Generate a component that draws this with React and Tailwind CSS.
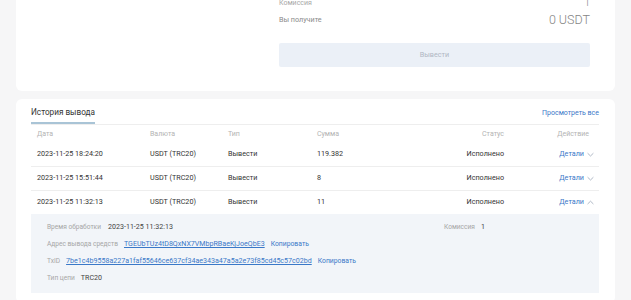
import React from "react";

const rows = [
  { date: "2023-11-25 18:24:20", amount: "119.382", open: false },
  { date: "2023-11-25 15:51:44", amount: "8", open: false },
  { date: "2023-11-25 11:32:13", amount: "11", open: true },
];

function Chevron({ up }) {
  return (
    <svg width="7" height="5" viewBox="0 0 7 5" className="ml-[3px]">
      <path
        d={up ? "M0.6 4 L3.5 1.2 L6.4 4" : "M0.6 1.2 L3.5 4 L6.4 1.2"}
        fill="none"
        stroke="#9aa6b8"
        strokeWidth="0.8"
      />
    </svg>
  );
}

function Details() {
  return (
    <div className="bg-[#f2f5f9] pl-[16px] pt-[5px] pb-[6px] text-[7.1px]">
      <div className="grid h-[17px] grid-cols-[397px_1fr] items-center">
        <div className="flex items-center gap-[7px]">
          <span className="text-[6.6px] text-[#a6a6a6]">Время обработки</span>
          <span className="text-[#444]">2023-11-25 11:32:13</span>
        </div>
        <div className="flex items-center gap-[6px]">
          <span className="text-[6.6px] text-[#a6a6a6]">Комиссия</span>
          <span className="text-[#444]">1</span>
        </div>
      </div>
      <div className="flex h-[17px] items-center gap-[6px]">
        <span className="text-[6.6px] text-[#a6a6a6]">Адрес вывода средств</span>
        <span className="text-[#3a78c8] underline">TGEUbTUz4tD8QxNX7VMbpRBaeKjJoeQbE3</span>
        <span className="text-[6.8px] text-[#3a78c8]">Копировать</span>
      </div>
      <div className="flex h-[17px] items-center gap-[6px]">
        <span className="text-[6.6px] text-[#a6a6a6]">TxID</span>
        <span className="text-[#3a78c8] underline">
          7be1c4b9558a227a1faf55646ce637cf34ae343a47a5a2e73f85cd45c57c02bd
        </span>
        <span className="text-[6.8px] text-[#3a78c8]">Копировать</span>
      </div>
      <div className="flex h-[17px] items-center gap-[6px]">
        <span className="text-[6.6px] text-[#a6a6a6]">Тип цепи</span>
        <span className="text-[#444]">TRC20</span>
      </div>
    </div>
  );
}

export default function App() {
  const cols = "grid grid-cols-[113px_78px_89px_109px_90px_89px] items-center";
  return (
    <div className="h-[300px] w-[631px] overflow-hidden bg-[#f6f6f7] px-[16px] font-['Roboto',sans-serif]">
      {/* withdraw form, scrolled partly out of view */}
      <div className="-mt-[3px] rounded-b-md bg-white pb-[24px]">
        <div className="ml-[263px] mr-[25px]">
          <div className="flex h-[12px] items-center justify-between">
            <span className="text-[7px] text-[#a8a8a8]">Комиссия</span>
            <span className="text-[10.5px] font-light text-[#888]">1</span>
          </div>
          <div className="flex h-[23px] items-center justify-between">
            <span className="text-[7.2px] text-[#8a8a8a]">Вы получите</span>
            <span className="text-[12.5px] font-light text-[#858585]">0 USDT</span>
          </div>
          <button className="mt-[11px] flex h-[24px] w-full items-center justify-center rounded-[2px] bg-[#ebf0f7] text-[7.2px] text-[#b0b7c3]">
            Вывести
          </button>
        </div>
      </div>

      {/* history */}
      <div className="mt-[8px] rounded-md bg-white px-[15px] pr-[16px]">
        <div className="flex h-[26px] items-end justify-between border-b border-[#eeeeee]">
          <div className="flex h-full items-center border-b-2 border-[#a9c4d6] pt-[4px] text-[8.2px] text-[#333]">
            История вывода
          </div>
          <span className="self-center pt-[4px] text-[7px] text-[#3a78c8]">Просмотреть все</span>
        </div>

        <div className={`${cols} h-[18px] text-[7px] text-[#b3b3b3]`}>
          <div className="pl-[6px]">Дата</div>
          <div className="pl-[6px]">Валюта</div>
          <div className="pl-[6px]">Тип</div>
          <div className="pl-[6px]">Сумма</div>
          <div className="pr-[6px] text-right">Статус</div>
          <div className="pr-[10px] text-right">Действие</div>
        </div>

        {rows.map((r) => (
          <div key={r.date}>
            <div
              className={`${cols} text-[7.2px] text-[#333] ${
                r.open ? "h-[23px]" : "h-[24px] border-b border-[#eeeeee]"
              }`}
            >
              <div className="pl-[6px]">{r.date}</div>
              <div className="pl-[6px]">USDT (TRC20)</div>
              <div className="pl-[6px]">Вывести</div>
              <div className="pl-[6px]">{r.amount}</div>
              <div className="pr-[6px] text-right">Исполнено</div>
              <div className="flex items-center justify-end pr-[5px] text-[#3a78c8]">
                Детали
                <Chevron up={r.open} />
              </div>
            </div>
            {r.open ? <Details /> : null}
          </div>
        ))}
        <div className="h-[10px]" />
      </div>
    </div>
  );
}
